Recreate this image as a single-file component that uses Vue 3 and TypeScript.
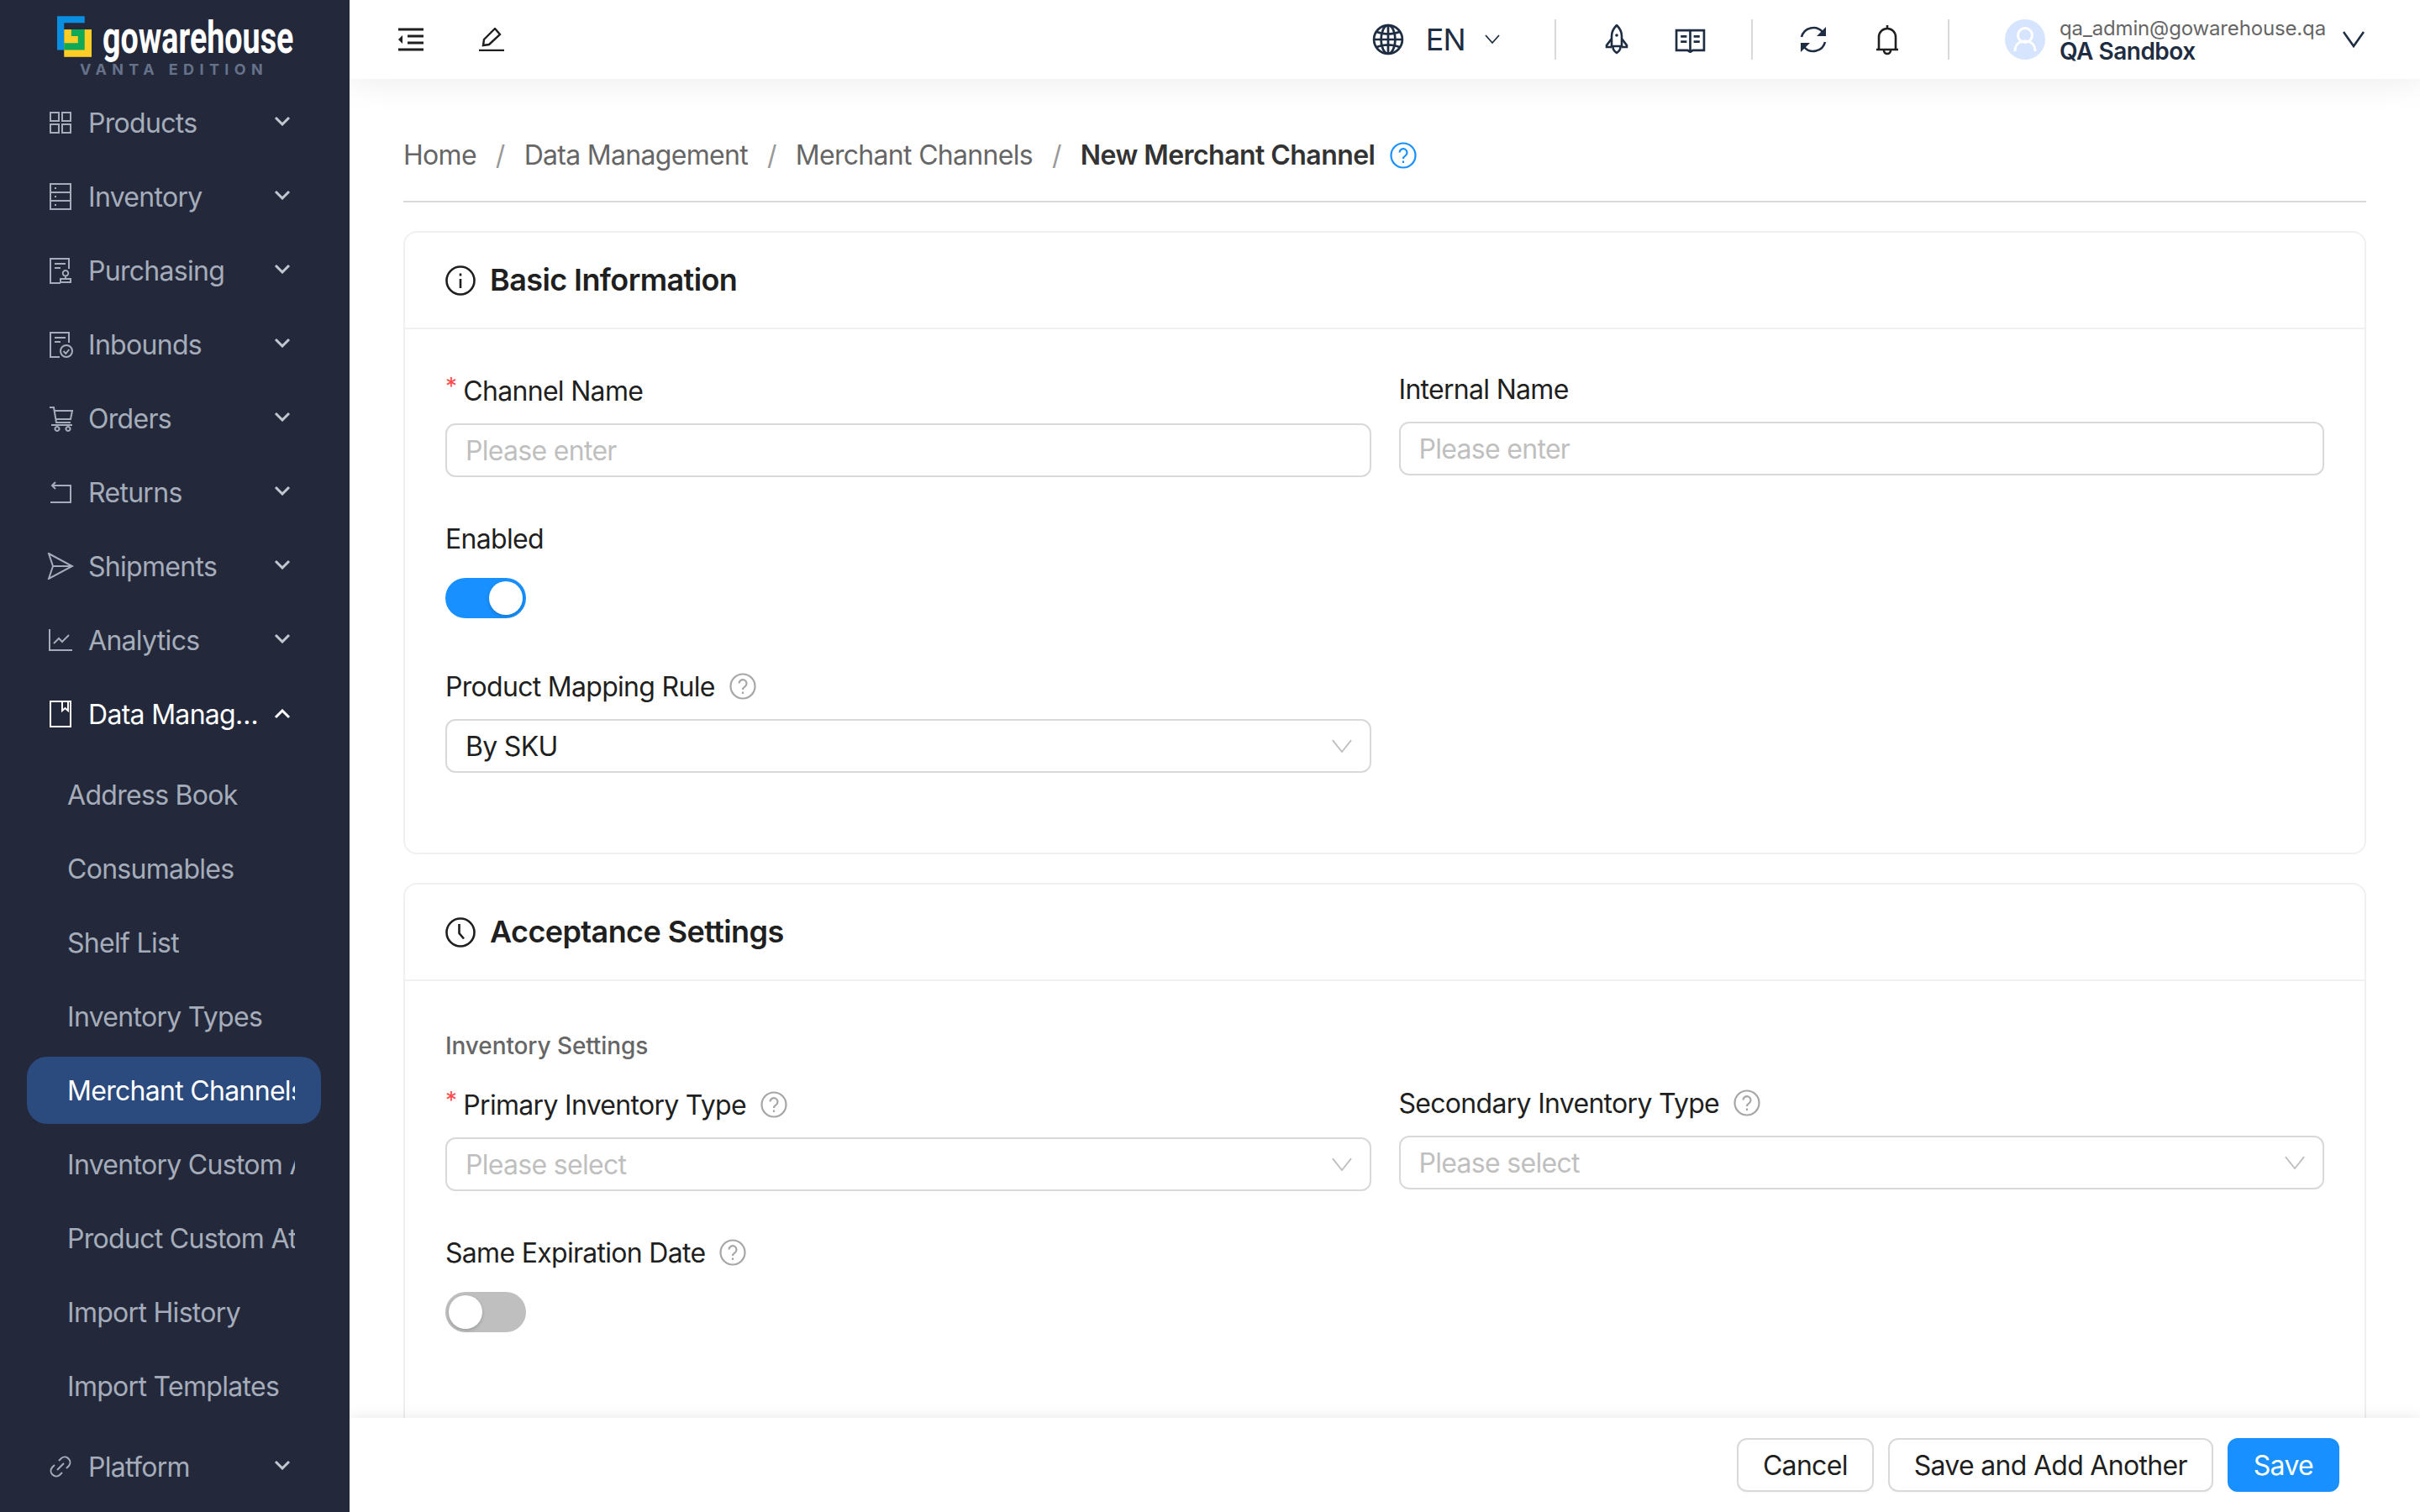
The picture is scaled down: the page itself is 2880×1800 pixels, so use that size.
<template>
    <div class="layout">
        <aside class="sidebar">
            <div class="logo">
                <div class="logo-row">
                    <svg class="logo-mark" viewBox="24 28 124 147">
                        <path fill="#0a8fe0" d="M24 28H123V52H49V150H24Z" />
                        <rect fill="#ffce26" x="49" y="76" width="99" height="99" />
                        <path fill="#0fa958" d="M75 76H123V150H49V125H99V100H75Z" />
                    </svg>
                    <span class="logo-name">gowarehouse</span>
                </div>
                <div class="logo-edition">VANTA EDITION</div>
            </div>

            <nav class="nav">
                <template v-for="item in navTop" :key="item.label">
                    <div class="nav-item">
                        <svg class="nav-icon" viewBox="0 0 32 32"><path :d="item.icon" /></svg>
                        <span class="nav-label">{{ item.label }}</span>
                        <svg class="nav-chevron" viewBox="0 0 20 12"><path d="M2 2l8 8 8-8" /></svg>
                    </div>
                </template>

                <div class="nav-item nav-item-open">
                    <svg class="nav-icon" viewBox="0 0 32 32"><path d="M4 1h24v30H4z M18 1v11l3.5-3 3.5 3V1" /></svg>
                    <span class="nav-label">Data Management</span>
                    <svg class="nav-chevron" viewBox="0 0 20 12"><path d="M2 10l8-8 8 8" /></svg>
                </div>
                <div class="sub-nav">
                    <div
                        v-for="sub in subItems"
                        :key="sub"
                        class="sub-item"
                        :class="{ 'sub-item-active': sub === 'Merchant Channels' }"
                    >
                        <span class="sub-label">{{ sub }}</span>
                    </div>
                </div>

                <div class="nav-item">
                    <svg class="nav-icon" viewBox="0 0 32 32"><path d="M14 9l3-3a6.4 6.4 0 0 1 9 9l-3 3 M18 23l-3 3a6.4 6.4 0 0 1-9-9l3-3 M12 20l8-8" /></svg>
                    <span class="nav-label">Platform</span>
                    <svg class="nav-chevron" viewBox="0 0 20 12"><path d="M2 2l8 8 8-8" /></svg>
                </div>
            </nav>
        </aside>

        <div class="main">
            <header class="topbar">
                <div class="topbar-left">
                    <svg class="tool-icon" width="30" height="28" viewBox="0 0 30 28">
                        <path d="M0 2h30 M11 10h19 M11 18h19 M0 26h30" />
                        <path class="solid" d="M5 9v10l-5-5z" />
                    </svg>
                    <svg class="tool-icon" width="30" height="28" viewBox="0 0 30 28">
                        <path stroke-width="2.4" d="M5 21l1-7L18 2l1-1 6 7-1 1-12 11z M0 27h30" />
                    </svg>
                </div>
                <div class="topbar-right">
                    <div class="lang">
                        <svg class="head-icon" width="38" height="38" viewBox="0 0 36 36">
                            <circle cx="18" cy="18" r="16" />
                            <ellipse cx="18" cy="18" rx="8" ry="16" />
                            <path d="M18 2v32 M2 18h32 M5 9.5c8 3 18 3 26 0 M5 26.5c8-3 18-3 26 0" />
                        </svg>
                        <span class="lang-text">EN</span>
                        <svg class="lang-chevron" width="18" height="12" viewBox="0 0 18 12"><path d="M1 1l8 9 8-9" /></svg>
                    </div>
                    <i class="head-divider"></i>
                    <div class="head-group group-help">
                        <svg class="head-icon" width="30" height="36" viewBox="0 0 29 36">
                            <path d="M14.5 1c-4 4-6 8-6 13v12h12V14c0-5-2-9-6-13z M8.5 17l-6 8v2h6 M20.5 17l6 8v2h-6 M10 27c0 4 3 6 4.5 7 1.500-1 4.500-3 4.500-7" />
                            <circle class="solid" cx="14.5" cy="13" r="1.800" />
                        </svg>
                        <svg class="head-icon" width="37" height="31" viewBox="0 0 36 30">
                            <path d="M18 4H2v23h13l3 2 3-2h13V4H18zv24 M7 11h7 M7 17h7 M22 11h7 M22 17h7" />
                        </svg>
                    </div>
                    <i class="head-divider"></i>
                    <div class="head-group group-sync">
                        <svg class="head-icon" width="36" height="36" viewBox="0 0 36 36">
                            <path d="M4 15A14.500 14.500 0 0 1 29 9 M32 21A14.500 14.500 0 0 1 7 27" />
                            <path class="solid" d="M33 3v11H22z M3 33V22h11z" />
                        </svg>
                        <svg class="bell" width="28" height="37" viewBox="0 0 28 37">
                            <path d="M14 1v5 M4 30V15a10 10 0 0 1 20 0v15 M1 30h26 M10 31a4 4 0 0 0 8 0" />
                        </svg>
                    </div>
                    <i class="head-divider"></i>
                    <div class="account">
                        <svg class="avatar" width="48" height="48" viewBox="0 0 48 48">
                            <circle class="avatar-bg" cx="24" cy="24" r="24" />
                            <circle cx="24" cy="19" r="8.500" />
                            <path d="M12 38c0-8 5-12 12-12s12 4 12 12" />
                        </svg>
                        <div class="account-text">
                            <div class="account-mail">qa_admin@gowarehouse.qa</div>
                            <div class="account-org">QA Sandbox</div>
                        </div>
                        <svg class="account-chevron" width="26" height="20" viewBox="0 0 26 20"><path d="M1 1l12 17L25 1" /></svg>
                    </div>
                </div>
            </header>

            <main class="content">
                <div class="crumbs">
                    <template v-for="crumb in crumbs" :key="crumb">
                        <span class="crumb">{{ crumb }}</span>
                        <span class="crumb-sep">/</span>
                    </template>
                    <span class="crumb-current">New Merchant Channel</span>
                    <svg class="help help-blue" viewBox="0 0 32 32">
                        <circle cx="16" cy="16" r="14.500" />
                        <path d="M11.500 12.500a4.500 4.500 0 1 1 7 3.800c-1.700 1.100-2.500 2-2.500 3.700 M16 22.500v2.500" />
                    </svg>
                </div>

                <section class="card">
                    <div class="card-head">
                        <svg class="card-icon" viewBox="0 0 36 36">
                            <circle cx="18" cy="18" r="16.500" />
                            <path d="M18 16v11 M18 9.500v3" />
                        </svg>
                        <h2>Basic Information</h2>
                    </div>
                    <div class="card-body body-basic">
                        <div class="form-grid">
                            <div class="field field-required">
                                <label><em>*</em>Channel Name</label>
                                <div class="control placeholder">Please enter</div>
                            </div>
                            <div class="field">
                                <label>Internal Name</label>
                                <div class="control placeholder">Please enter</div>
                            </div>
                            <div class="field field-switch">
                                <label>Enabled</label>
                                <div class="switch switch-on"><span class="knob"></span></div>
                            </div>
                            <div class="field field-col1 field-after-switch">
                                <label>Product Mapping Rule
                                    <svg class="help" viewBox="0 0 32 32">
                                        <circle cx="16" cy="16" r="14.500" />
                                        <path d="M11.500 12.500a4.500 4.500 0 1 1 7 3.800c-1.700 1.100-2.500 2-2.500 3.700 M16 22.500v2.500" />
                                    </svg>
                                </label>
                                <div class="control">
                                    By SKU
                                    <svg class="select-arrow" viewBox="0 0 26 18"><path d="M1 1l12 15L25 1" /></svg>
                                </div>
                            </div>
                        </div>
                    </div>
                </section>

                <section class="card card-accept">
                    <div class="card-head">
                        <svg class="card-icon" viewBox="0 0 36 36">
                            <circle cx="18" cy="18" r="16.500" />
                            <path d="M16.500 8v11l5.500 6.500" />
                        </svg>
                        <h2>Acceptance Settings</h2>
                    </div>
                    <div class="card-body body-accept">
                        <div class="group-title">Inventory Settings</div>
                        <div class="form-grid">
                            <div class="field field-required">
                                <label><em>*</em>Primary Inventory Type
                                    <svg class="help" viewBox="0 0 32 32">
                                        <circle cx="16" cy="16" r="14.500" />
                                        <path d="M11.500 12.500a4.500 4.500 0 1 1 7 3.800c-1.700 1.100-2.500 2-2.500 3.700 M16 22.500v2.500" />
                                    </svg>
                                </label>
                                <div class="control placeholder">
                                    Please select
                                    <svg class="select-arrow" viewBox="0 0 26 18"><path d="M1 1l12 15L25 1" /></svg>
                                </div>
                            </div>
                            <div class="field">
                                <label>Secondary Inventory Type
                                    <svg class="help" viewBox="0 0 32 32">
                                        <circle cx="16" cy="16" r="14.500" />
                                        <path d="M11.500 12.500a4.500 4.500 0 1 1 7 3.800c-1.700 1.100-2.500 2-2.500 3.700 M16 22.500v2.500" />
                                    </svg>
                                </label>
                                <div class="control placeholder">
                                    Please select
                                    <svg class="select-arrow" viewBox="0 0 26 18"><path d="M1 1l12 15L25 1" /></svg>
                                </div>
                            </div>
                            <div class="field field-switch">
                                <label>Same Expiration Date
                                    <svg class="help" viewBox="0 0 32 32">
                                        <circle cx="16" cy="16" r="14.500" />
                                        <path d="M11.500 12.500a4.500 4.500 0 1 1 7 3.800c-1.700 1.100-2.500 2-2.500 3.700 M16 22.500v2.500" />
                                    </svg>
                                </label>
                                <div class="switch"><span class="knob"></span></div>
                            </div>
                        </div>
                    </div>
                </section>
            </main>

            <footer class="footer">
                <button class="btn">Cancel</button>
                <button class="btn">Save and Add Another</button>
                <button class="btn btn-primary">Save</button>
            </footer>
        </div>
    </div>
</template>

<script setup lang="ts">

interface NavItem {
    label: string;
    icon: string;
}

const navTop: NavItem[] = [
    { label: 'Products', icon: 'M4 4h10v10H4z M18 4h10v10H18z M4 18h10v10H4z M18 18h10v10H18z' },
    { label: 'Inventory', icon: 'M4 1h24v30H4z M4 11h24 M4 21h24 M9 6h2 M9 16h2 M9 26h2' },
    { label: 'Purchasing', icon: 'M26 14V2H4v29h12 M9 8h13 M9 13h7 M22 16a3.300 3.300 0 1 0 .01 0z M22 22v3 M16 26h12v4H16z' },
    { label: 'Inbounds', icon: 'M26 14V2H4v29h11 M9 8h13 M9 13h7 M30 24a7 7 0 1 1-14 0a7 7 0 1 1 14 0z M19.500 24l2.800 3 4-5' },
    { label: 'Orders', icon: 'M3 3h5l3 18h17 M8.500 7H30l-2 10H11 M5 24h25 M12 26a2.500 2.500 0 1 0 .01 0z M25 26a2.500 2.500 0 1 0 .01 0z' },
    { label: 'Returns', icon: 'M6 8H28V28H4 M10 4L6 8l4 4' },
    { label: 'Shipments', icon: 'M2 1L30 16 2 31 7 16z M7 16h23' },
    { label: 'Analytics', icon: 'M3 3v25h27 M8 20l6-6 4 4 8-8' },
];

const subItems: string[] = [
    'Address Book',
    'Consumables',
    'Shelf List',
    'Inventory Types',
    'Merchant Channels',
    'Inventory Custom Attributes',
    'Product Custom Attributes',
    'Import History',
    'Import Templates',
];

const crumbs: string[] = ['Home', 'Data Management', 'Merchant Channels'];

</script>

<style>
html,
body {
    margin: 0;
    height: 100%;
    background: #fff;
}
</style>

<style scoped>
.layout {
    display: flex;
    height: 100vh;
    overflow: hidden;
    font-family: Inter, "Noto Sans", sans-serif;
    font-size: 32px;
    letter-spacing: -0.7px;
    color: #1f1f1f;
}

/* sidebar */
.sidebar {
    width: 416px;
    flex-shrink: 0;
    background: #23293b;
    position: relative;
    z-index: 3;
    overflow: hidden;
}

.logo {
    height: 102px;
    box-sizing: border-box;
    padding: 19px 0 0 68px;
}

.logo-row {
    display: flex;
    height: 49px;
}

.logo-mark {
    width: 41px;
    height: 49px;
    flex-shrink: 0;
}

.logo-name {
    display: inline-block;
    margin: -2px 0 0 13px;
    font-family: Roboto, sans-serif;
    font-weight: 700;
    font-size: 53px;
    line-height: 56px;
    letter-spacing: 0;
    color: #fff;
    transform: scaleX(0.71);
    transform-origin: left center;
    white-space: nowrap;
}

.logo-edition {
    margin: 7px 0 0 27px;
    font-size: 18px;
    line-height: 16px;
    font-weight: 700;
    letter-spacing: 6.400px;
    color: #66728a;
    white-space: nowrap;
}

.nav-item {
    height: 88px;
    display: flex;
    align-items: center;
    padding-left: 56px;
    color: #a6adba;
}

.nav-icon {
    width: 32px;
    height: 32px;
    flex-shrink: 0;
    fill: none;
    stroke: currentColor;
    stroke-width: 2;
}

.nav-label {
    width: 210px;
    margin-left: 17px;
    white-space: nowrap;
    overflow: hidden;
    text-overflow: ellipsis;
}

.nav-chevron {
    width: 20px;
    height: 12px;
    margin: -4px 0 0 11px;
    fill: none;
    stroke: #c3c7ce;
    stroke-width: 3;
}

.nav-item-open {
    color: #fff;
}

.nav-item-open .nav-chevron {
    stroke: #fff;
    margin-top: 0;
}

.sub-nav {
    display: flex;
    flex-direction: column;
    gap: 8px;
    padding: 12px 0;
}

.sub-item {
    height: 80px;
    width: 350px;
    margin-left: 32px;
    box-sizing: border-box;
    padding: 0 31px 0 48px;
    display: flex;
    align-items: center;
    border-radius: 24px;
    color: #a6adba;
}

.sub-label {
    white-space: nowrap;
    overflow: hidden;
}

.sub-item-active {
    background: #2b4a7e;
    color: #fff;
}

/* main column */
.main {
    flex: 1;
    min-width: 0;
    display: flex;
    flex-direction: column;
}

.topbar {
    height: 94px;
    flex-shrink: 0;
    display: flex;
    justify-content: space-between;
    align-items: center;
    padding: 0 66px 0 58px;
    background: #fff;
    box-shadow: 0 4px 40px rgba(0, 0, 0, 0.08);
    position: relative;
    z-index: 2;
}

.topbar-left {
    display: flex;
    align-items: center;
    gap: 66px;
}

.tool-icon {
    fill: none;
    stroke: #1f1f1f;
    stroke-width: 3;
}

.solid {
    fill: currentColor;
    stroke: none;
}

.topbar-right {
    display: flex;
    align-items: center;
}

.lang {
    display: flex;
    align-items: center;
}

.head-icon {
    fill: none;
    stroke: #1f2d42;
    stroke-width: 2.600;
    color: #1f2d42;
}

.lang-text {
    margin-left: 26px;
    font-size: 36px;
    color: #1f2d42;
}

.lang-chevron {
    margin-left: 23px;
    fill: none;
    stroke: #1f2d42;
    stroke-width: 1.800;
}

.head-divider {
    width: 2px;
    height: 48px;
    background: #d9d9d9;
}

.lang + .head-divider {
    margin-left: 65px;
}

.head-group {
    display: flex;
    align-items: center;
}

.group-help {
    gap: 54px;
    margin: 0 54px 0 57px;
}

.group-sync {
    gap: 56px;
    margin: 0 58px 0 54px;
}

.bell {
    fill: none;
    stroke: #1f1f1f;
    stroke-width: 2.600;
}

.account {
    display: flex;
    align-items: center;
    margin-left: 66px;
}

.avatar {
    fill: none;
    stroke: #fff;
    stroke-width: 3;
}

.avatar-bg {
    fill: #d6e4fd;
    stroke: none;
}

.account-text {
    margin-left: 17px;
}

.account-mail {
    font-size: 24px;
    line-height: 28px;
    letter-spacing: -0.15px;
    color: #666;
}

.account-org {
    font-size: 28px;
    line-height: 26px;
    font-weight: 600;
    letter-spacing: -0.5px;
    color: #1f2d42;
}

.account-chevron {
    margin-left: 20px;
    fill: none;
    stroke: #1f2d42;
    stroke-width: 2.600;
}

/* content */
.content {
    flex: 1;
    min-height: 0;
    overflow: hidden;
    padding: 67px 64px 0;
    background: #fff;
}

.crumbs {
    display: flex;
    align-items: center;
    height: 48px;
    padding-bottom: 30px;
    border-bottom: 2px solid #d9d9d9;
    line-height: 48px;
    box-sizing: content-box;
}

.crumb {
    color: #666;
}

.crumb-sep {
    margin: 0 23px;
    color: #999;
}

.crumb-current {
    font-weight: 600;
    letter-spacing: -0.55px;
    color: #333;
}

.help {
    width: 32px;
    height: 32px;
    margin-left: 17px;
    flex-shrink: 0;
    fill: none;
    stroke: #a6a6a6;
    stroke-width: 2.200;
}

.help-blue {
    margin-left: 18px;
    stroke: #1890ff;
}

.card {
    margin-top: 34px;
    border: 2px solid #f0f0f0;
    border-radius: 16px;
    background: #fff;
}

.card-head {
    height: 113px;
    box-sizing: content-box;
    display: flex;
    align-items: center;
    padding: 0 48px;
    border-bottom: 2px solid #f0f0f0;
}

.card-icon {
    width: 36px;
    height: 36px;
    fill: none;
    stroke: #1f1f1f;
    stroke-width: 2.600;
    flex-shrink: 0;
}

.card-head h2 {
    margin: -2px 0 0 17px;
    font-size: 36px;
    font-weight: 600;
    letter-spacing: -0.6px;
    color: #1f1f1f;
}

.card-body {
    padding: 0 48px;
}

.body-basic {
    padding-top: 47px;
    padding-bottom: 95px;
}

.body-accept {
    padding-top: 57px;
    padding-bottom: 300px;
}

.group-title {
    font-size: 28px;
    line-height: 40px;
    font-weight: 500;
    letter-spacing: -0.1px;
    color: #666;
    margin-bottom: 24px;
}

.form-grid {
    display: grid;
    grid-template-columns: 1fr 1fr;
    column-gap: 33px;
    align-items: start;
}

.field label {
    display: flex;
    align-items: center;
    height: 48px;
    margin-bottom: 15px;
    white-space: nowrap;
}

.field label em {
    font-style: normal;
    color: #ff4d4f;
    font-size: 28px;
    margin-right: 8px;
    position: relative;
    top: -5px;
}

.field-required {
    margin-top: 2px;
}

.field-switch,
.field-col1 {
    grid-column: 1;
}

.field-switch {
    margin-top: 49px;
}

.field-after-switch {
    margin-top: 57px;
}

.control {
    height: 64px;
    box-sizing: border-box;
    border: 2px solid #d9d9d9;
    border-radius: 12px;
    padding: 0 21px 0 22px;
    display: flex;
    align-items: center;
    justify-content: space-between;
}

.placeholder {
    color: #bfbfbf;
}

.select-arrow {
    width: 24px;
    height: 17px;
    fill: none;
    stroke: #bfbfbf;
    stroke-width: 2;
}

.switch {
    width: 96px;
    height: 48px;
    margin-top: 23px;
    padding: 4px;
    box-sizing: border-box;
    border-radius: 24px;
    background: #bfbfbf;
    display: flex;
}

.switch-on {
    background: #1890ff;
    justify-content: flex-end;
}

.knob {
    width: 40px;
    height: 40px;
    border-radius: 50%;
    background: #fff;
    box-shadow: 0 2px 4px rgba(0, 35, 11, 0.2);
}

.footer {
    height: 112px;
    flex-shrink: 0;
    box-sizing: border-box;
    display: flex;
    justify-content: flex-end;
    align-items: center;
    gap: 17px;
    padding-right: 96px;
    background: #fff;
    box-shadow: 0 -2px 16px rgba(0, 0, 0, 0.08);
    position: relative;
    z-index: 2;
}

.btn {
    height: 64px;
    padding: 0 29px;
    border: 2px solid #d9d9d9;
    border-radius: 12px;
    background: #fff;
    font: inherit;
    letter-spacing: inherit;
    color: #1f1f1f;
    box-shadow: 0 2px 0 rgba(0, 0, 0, 0.02);
}

.btn-primary {
    border-color: #1890ff;
    background: #1890ff;
    color: #fff;
}
</style>
